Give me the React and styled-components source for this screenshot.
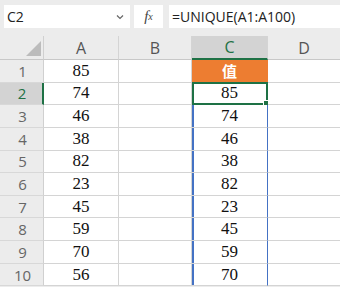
import React from "react";
import styled, { createGlobalStyle } from "styled-components";

const GlobalStyle = createGlobalStyle`
  html, body {
    margin: 0;
    padding: 0;
    background: #ececec;
    overflow: hidden;
  }
`;

const Page = styled.div`
  width: 340px;
  height: 287px;
  background: #ececec;
  font-family: "Open Sans", "Noto Sans", sans-serif;
`;

const FormulaBar = styled.div`
  display: flex;
  align-items: stretch;
  height: 23px;
  padding: 5px 0 0 4px;
  margin-bottom: 8px;
  gap: 4px;
`;

const NameBox = styled.div`
  width: 126px;
  display: flex;
  align-items: center;
  justify-content: space-between;
  background: #fff;
  padding: 0 6px 0 3px;
  box-sizing: border-box;
  font-size: 14px;
  color: #222;
`;

const FxBox = styled.div`
  width: 29px;
  display: flex;
  align-items: center;
  justify-content: center;
  background: #fff;
  font-family: "Liberation Serif", "Times New Roman", "DejaVu Serif", serif;
  font-style: italic;
  font-size: 15px;
  color: #444;
  margin-right: 2px;

  sub {
    font-size: 10px;
    vertical-align: -1px;
  }
`;

const FormulaInput = styled.div`
  flex: 1;
  display: flex;
  align-items: center;
  background: #fff;
  padding-left: 3px;
  font-size: 14px;
  color: #222;
`;

const Grid = styled.div`
  display: grid;
  grid-template-columns: 44px 75px 73px 76px 1fr;
  grid-template-rows: 24px repeat(10, 22.65px);
`;

const Corner = styled.div`
  position: relative;
  border-right: 1px solid #d0d0d0;
  border-bottom: 1px solid #c8c8c8;

  &::after {
    content: "";
    position: absolute;
    right: 2px;
    bottom: 3px;
    width: 0;
    height: 0;
    border-left: 15px solid transparent;
    border-bottom: 15px solid #bcbcbc;
  }
`;

const ColHead = styled.div`
  display: flex;
  align-items: center;
  justify-content: center;
  font-size: 16px;
  color: ${(p) => (p.$active ? "#1e7145" : "#555")};
  background: ${(p) => (p.$active ? "#d3d3d3" : "transparent")};
  border-right: ${(p) => (p.$last ? "none" : "1px solid #d4d4d4")};
  border-bottom: ${(p) => (p.$active ? "2px solid #1e7145" : "1px solid #c8c8c8")};
  box-sizing: border-box;
`;

const RowHead = styled.div`
  display: flex;
  align-items: center;
  justify-content: center;
  font-size: 15px;
  color: ${(p) => (p.$active ? "#1e7145" : "#666")};
  background: ${(p) => (p.$active ? "#d3d3d3" : "transparent")};
  border-right: ${(p) => (p.$active ? "2px solid #1e7145" : "1px solid #d0d0d0")};
  border-bottom: 1px solid #d8d8d8;
  box-sizing: border-box;
  padding-left: 2px;
`;

const Cell = styled.div`
  position: relative;
  display: flex;
  align-items: center;
  justify-content: center;
  background: #fff;
  border-right: ${(p) => (p.$last ? "none" : "1px solid #d4d4d4")};
  border-bottom: 1px solid #d4d4d4;
  box-sizing: border-box;
  font-family: "Liberation Serif", "Times New Roman", "DejaVu Serif", serif;
  font-size: 17px;
  color: #111;
`;

const SpillCell = styled(Cell)`
  box-shadow: inset 2px 0 #4472c4;
  border-right: 1px solid #4472c4;
`;

const HeaderCell = styled(Cell)`
  background: #ed7d31;
  color: #fff;
  font-weight: bold;
  font-family: "Noto Sans CJK SC", sans-serif;
  font-size: 15px;
  border-right-color: #ed7d31;
  border-bottom-color: #ed7d31;
`;

const Selection = styled.div`
  position: absolute;
  left: 0;
  top: -1px;
  right: -1px;
  bottom: -1px;
  border: 2px solid #1e7145;
  pointer-events: none;

  &::after {
    content: "";
    position: absolute;
    right: -4px;
    bottom: -4px;
    width: 5px;
    height: 5px;
    background: #1e7145;
    border: 1px solid #fff;
  }
`;

const colA = [85, 74, 46, 38, 82, 23, 45, 59, 70, 56];
const colC = ["值", 85, 74, 46, 38, 82, 23, 45, 59, 70];

const Chevron = () => (
  <svg width="8" height="6" viewBox="0 0 8 6">
    <path d="M1 1.5 L4 4.5 L7 1.5" fill="none" stroke="#666" strokeWidth="1.2" />
  </svg>
);

const renderC = (i) => {
  if (i === 0) return <HeaderCell>{colC[i]}</HeaderCell>;
  if (i === 1)
    return (
      <Cell>
        {colC[i]}
        <Selection />
      </Cell>
    );
  return <SpillCell>{colC[i]}</SpillCell>;
};

export default function App() {
  return (
    <Page>
      <GlobalStyle />
      <FormulaBar>
        <NameBox>
          <span>C2</span>
          <Chevron />
        </NameBox>
        <FxBox>
          f<sub>x</sub>
        </FxBox>
        <FormulaInput>=UNIQUE(A1:A100)</FormulaInput>
      </FormulaBar>
      <Grid>
        <Corner />
        <ColHead>A</ColHead>
        <ColHead>B</ColHead>
        <ColHead $active>C</ColHead>
        <ColHead $last>D</ColHead>
        {colA.map((a, i) => (
          <React.Fragment key={i}>
            <RowHead $active={i === 1}>{i + 1}</RowHead>
            <Cell>{a}</Cell>
            <Cell />
            {renderC(i)}
            <Cell $last />
          </React.Fragment>
        ))}
      </Grid>
    </Page>
  );
}
